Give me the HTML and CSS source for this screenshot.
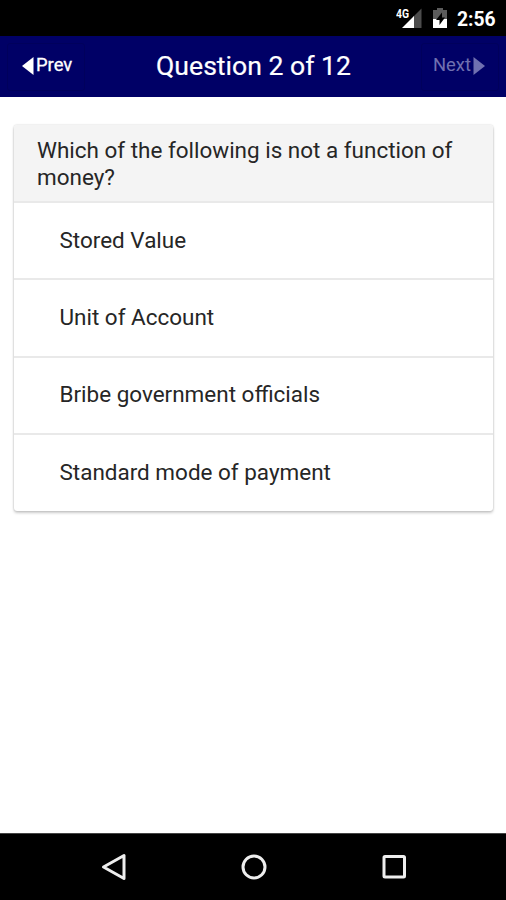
FILE: index.html
```html
<!DOCTYPE html>
<html lang="en">
<head>
<meta charset="utf-8">
<title>Quiz</title>
<link rel="stylesheet" href="styles.css">
</head>
<body>
<div class="status">
  <svg class="signal" width="26" height="24" viewBox="0 0 26 24">
    <path d="M17.500 11.500 25.500 3.500V23h-8z" fill="#4c4c4c"/>
    <path d="M18 11V23H6z" fill="#fff"/>
    <text class="network" x="0" y="12.500" textLength="13" lengthAdjust="spacingAndGlyphs">4G</text>
  </svg>
  <svg class="battery" width="14" height="20" viewBox="0 0 14 20">
    <path d="M4 0h6v2h4v9H0V2h4z" fill="#5c5c5c"/>
    <path d="M0 11h14v9H0z" fill="#fff"/>
    <path d="M9 4.500 3 12h3.500v5L12 9.500H9z" fill="#000"/>
  </svg>
  <span class="clock">2:56</span>
</div>
<header class="toolbar">
  <button class="nav prev"><svg width="12" height="18" viewBox="0 0 12 18"><path d="M11.500 0v18L0 9z" fill="currentColor"/></svg><span>Prev</span></button>
  <h1 class="title">Question 2 of 12</h1>
  <button class="nav next"><span>Next</span><svg width="12" height="18" viewBox="0 0 12 18"><path d="M.5 0v18L12 9z" fill="currentColor"/></svg></button>
</header>
<main class="content">
  <section class="card">
    <h2 class="question">Which of the following is not a function of money?</h2>
    <div class="answer"><span>Stored Value</span></div>
    <div class="answer"><span>Unit of Account</span></div>
    <div class="answer"><span>Bribe government officials</span></div>
    <div class="answer"><span>Standard mode of payment</span></div>
  </section>
</main>
<footer class="system-nav">
  <svg width="26" height="28" viewBox="0 0 26 28"><path d="M23 2.500v23L2.500 14z"/></svg>
  <svg width="26" height="28" viewBox="0 0 26 28"><circle cx="13" cy="14" r="11"/></svg>
  <svg width="26" height="28" viewBox="0 0 26 28"><rect x="3" y="3.500" width="20.500" height="20.500" rx="1"/></svg>
</footer>
</body>
</html>
```

FILE: styles.css
```css
* { box-sizing: border-box; }
body {
  margin: 0;
  height: 900px;
  display: flex;
  flex-direction: column;
  background: #fff;
  font-family: Roboto, sans-serif;
}
.status {
  height: 36px;
  flex: none;
  background: #000;
  color: #fff;
  display: flex;
  justify-content: flex-end;
  align-items: flex-start;
  padding: 0 11px 0 0;
}
.signal { margin: 5px 11px 0 0; }
.network { font: 700 12.500px Roboto, sans-serif; fill: #fff; }
.battery { margin: 8px 10px 0 0; }
.clock { width: 38px; font-size: 19.300px; font-weight: 700; line-height: 23px; margin-top: 8px; white-space: nowrap; }
.toolbar {
  height: 61px;
  flex: none;
  background: #000066;
  color: #fff;
  display: grid;
  grid-template-columns: 78px 1fr 78px;
  align-items: center;
  padding: 0 7px;
}
.title { margin: 0 0 2px 1px; text-align: center; font-size: 26.600px; font-weight: 400; line-height: 32px; white-space: nowrap; -webkit-text-stroke: .2px; }
.nav {
  height: 48px;
  padding: 0;
  display: flex;
  align-items: center;
  gap: 2px;
  border: 1px solid #00005c;
  border-radius: 3px;
  background: none;
  color: inherit;
  font: 400 18.400px/22px Roboto, sans-serif;
}
.nav span { padding-bottom: 4px; }
.prev { padding-left: 14px; -webkit-text-stroke: .3px; }
.next { justify-content: flex-end; padding-right: 13px; color: #7070b0; }
.nav svg { margin-bottom: 2px; }
.content { flex: 1; padding: 28px 13px 0 14px; }
.card {
  border-radius: 3px;
  box-shadow: 0 2px 3px rgba(0, 0, 0, .2), 0 0 2px rgba(0, 0, 0, .2);
  overflow: hidden;
  color: #262626;
  font-size: 22.480px;
}
.question {
  margin: 0;
  height: 76px;
  padding: 12px 24px 0 23px;
  background: #f4f4f4;
  font-size: inherit;
  font-weight: 400;
  line-height: 27px;
}
.answer {
  height: 77.400px;
  border-top: 2px solid #e9e9e9;
  padding: 0 0 2px 45.500px;
  display: flex;
  align-items: center;
}
.system-nav {
  height: 67px;
  flex: none;
  background: #000;
  border-top: 1px solid #444;
  display: flex;
  justify-content: center;
  align-items: center;
  gap: 114px;
  padding-left: 1px;
}
.system-nav svg { fill: none; stroke: #eee; stroke-width: 3; stroke-linejoin: round; }
```
